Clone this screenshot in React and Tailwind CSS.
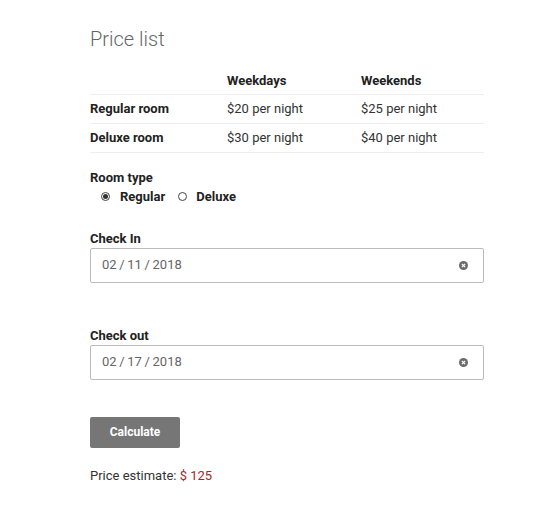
import React from 'react';

const rows = [
  { room: 'Regular room', weekdays: '$20 per night', weekends: '$25 per night' },
  { room: 'Deluxe room', weekdays: '$30 per night', weekends: '$40 per night' },
];

const ClearIcon = () => (
  <svg width="9" height="9" viewBox="0 0 10 10">
    <circle cx="5" cy="5" r="5" fill="#6b6b6b" />
    <path d="M3.2 3.2 L6.8 6.8 M6.8 3.2 L3.2 6.8" stroke="#fff" strokeWidth="1.4" />
  </svg>
);

const DateField = ({ label, value }) => (
  <div>
    <label className="block text-[13px] font-bold text-[#222] leading-[16px] mb-[1px]">{label}</label>
    <div className="flex items-center justify-between h-[35px] border border-[#bbb] rounded-[2px] pl-[11px] pr-[15px]">
      <span className="text-[13px] text-[#666]">{value}</span>
      <ClearIcon />
    </div>
  </div>
);

export default function App() {
  return (
    <div className="min-h-[522px] bg-white font-['Roboto',sans-serif] text-[#333]">
      <div className="w-[394px] ml-[90px] pt-[27px]">
        <h1 className="text-[20px] font-light text-[#666] leading-[24px]">Price list</h1>

        {/* Price table */}
        <table className="w-full mt-[19px] text-[13px] border-collapse">
          <thead>
            <tr className="border-b border-[#eee]">
              <th className="w-[137px] h-[24px]"></th>
              <th className="w-[134px] text-left font-bold text-[#222] pb-[3px]">Weekdays</th>
              <th className="text-left font-bold text-[#222] pb-[3px]">Weekends</th>
            </tr>
          </thead>
          <tbody>
            {rows.map((r) => (
              <tr key={r.room} className="border-b border-[#eee] h-[29px]">
                <td className="font-bold text-[#222]">{r.room}</td>
                <td className="text-[#333]">{r.weekdays}</td>
                <td className="text-[#333]">{r.weekends}</td>
              </tr>
            ))}
          </tbody>
        </table>

        {/* Room type */}
        <div className="mt-[17px]">
          <div className="text-[13px] font-bold text-[#222] leading-[16px]">Room type</div>
          <div className="flex items-center ml-[11px] mt-[2px] text-[13px] font-bold text-[#222] leading-[18px]">
            <span className="w-[9px] h-[9px] rounded-full border border-[#444] flex items-center justify-center">
              <span className="w-[5px] h-[5px] rounded-full bg-[#333]" />
            </span>
            <span className="ml-[10px]">Regular</span>
            <span className="ml-[13px] w-[9px] h-[9px] rounded-full border border-[#444]" />
            <span className="ml-[9px]">Deluxe</span>
          </div>
        </div>

        <div className="mt-[25px]">
          <DateField label="Check In" value={'02\u2009/\u200911\u2009/\u20092018'} />
        </div>

        <div className="mt-[45px]">
          <DateField label="Check out" value={'02\u2009/\u200917\u2009/\u20092018'} />
        </div>

        <button className="mt-[37px] w-[90px] h-[31px] bg-[#767676] rounded-[2px] text-white text-[12px] font-bold">
          Calculate
        </button>

        <p className="mt-[18px] text-[13px] text-[#333]">
          Price estimate: <span className="text-[#a4262c]">$ 125</span>
        </p>
      </div>
    </div>
  );
}
